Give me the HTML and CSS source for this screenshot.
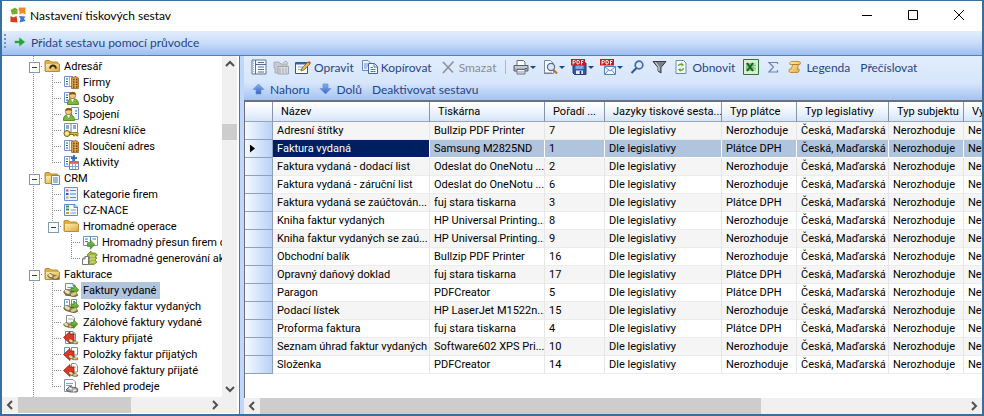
FILE: index.html
```html
<!DOCTYPE html>
<html lang="cs">
<head>
<meta charset="utf-8">
<title>Nastavení tiskových sestav</title>
<link rel="stylesheet" href="styles.css">
</head>
<body>
<svg class="defs" aria-hidden="true">
  <defs>
    <linearGradient id="gold" x1="0" y1="0" x2="1" y2="1"><stop offset="0" stop-color="#fff0b0"/><stop offset="1" stop-color="#dfa93a"/></linearGradient>
    <linearGradient id="greenArrow" x1="0" y1="0" x2="0" y2="1"><stop offset="0" stop-color="#8fce4e"/><stop offset="1" stop-color="#3e8f1c"/></linearGradient>
    <linearGradient id="blueArrow" x1="0" y1="0" x2="0" y2="1"><stop offset="0" stop-color="#86b0f2"/><stop offset="1" stop-color="#3465bd"/></linearGradient>
  </defs>
  <symbol id="folder" viewBox="0 0 16 16"><path d="M1 13V3.500Q1 2.500 2 2.500H5.500L7 4H13Q14 4 14 5V6H15.500V13.500H1.500Z" fill="#e0b040" stroke="#a47a28" stroke-width=".8"/><path d="M2 6H15V13H2Z" fill="url(#gold)"/></symbol>
  <symbol id="sheet" viewBox="0 0 16 16"><path d="M1.500 2.500H9.500V12.500H1.500Z" fill="#fff" stroke="#6f93c5"/><path d="M3 5H5M3 7.500H5M3 10H5" stroke="#1f4e9c"/><path d="M6.500 3V12" stroke="#9ab5dc"/></symbol>
  <symbol id="doc" viewBox="0 0 16 16"><path d="M2.500 1.500H10L12.500 4V13.500H2.500Z" fill="#f6faff" stroke="#6c8fc3"/><path d="M10 1.500V4H12.500" fill="none" stroke="#6c8fc3"/><path d="M4.500 5.500H10M4.500 7.500H10" stroke="#7598ce"/></symbol>
  <symbol id="coins" viewBox="0 0 16 16"><path d="M1 9Q4 6 7 9L11 10Q15 11 14.500 13.500Q12 15.500 8 14L3 12.500Q0 11 1 9Z" fill="#8f8050" stroke="#514725" stroke-width=".7"/><ellipse cx="4.200" cy="9.800" rx="2.800" ry="1.700" fill="#efe0a6" transform="rotate(25 4.200 9.800)"/><ellipse cx="10.800" cy="12" rx="3.100" ry="1.600" fill="#d9c681" transform="rotate(-20 10.800 12)"/></symbol>
  <symbol id="person" viewBox="0 0 16 16"><path d="M4.500 14.500Q4 8.500 9.500 8.500Q15.500 8.500 15.500 14.500Z" fill="#7fb83b" stroke="#46781e" stroke-width=".8"/><path d="M8 9L9.500 12L11 9Z" fill="#fff"/><circle cx="9.500" cy="5.500" r="3.200" fill="#f2c88b" stroke="#986223" stroke-width=".7"/><path d="M6.300 5Q6.500 1.800 9.800 2T12.800 5Q10 3.500 6.300 5Z" fill="#8a5217"/></symbol>
  <symbol id="arrow-out" viewBox="0 0 16 16"><path d="M8 6H11V3L15.700 8L11 13V10H8Z" fill="url(#greenArrow)" stroke="#377d18" stroke-width=".7"/></symbol>
  <symbol id="arrow-in" viewBox="0 0 16 16"><path d="M11 4H7V1.500L.500 7.500L7 13.500V11H11Z" fill="#dc3826" stroke="#9e1c13" stroke-width=".8"/></symbol>

  <symbol id="folder-home" viewBox="0 0 16 16"><use href="#folder"/><path d="M6 10.500Q6.500 7.500 9 7.500T12 10.500" fill="none" stroke="#3c2c0c" stroke-width="2"/></symbol>
  <symbol id="folder-list" viewBox="0 0 16 16"><use href="#folder"/><path d="M7.500 5.500H15.500V14.500H7.500Z" fill="#f5faff" stroke="#5f8dbb"/><path d="M9 8H14M9 10H14M9 12H14" stroke="#4b7f9e"/></symbol>
  <symbol id="folder-coins" viewBox="0 0 16 16"><use href="#folder"/><use href="#coins" x="3" y="1" width="13" height="14"/></symbol>
  <symbol id="company" viewBox="0 0 16 16"><use href="#sheet"/><path d="M8.500 3.500L13 2.500L15.500 4V14.500H8.500Z" fill="#dda04c" stroke="#9c6220" stroke-width=".8"/><path d="M10 5.500H11.500M13 5.500H14.500M10 8H11.500M13 8H14.500M10 10.500H11.500M13 10.500H14.500M10 13H11.500M13 13H14.500" stroke="#754411" stroke-width="1.300"/></symbol>
  <symbol id="people" viewBox="0 0 16 16"><use href="#sheet"/><use href="#person"/></symbol>
  <symbol id="contact" viewBox="0 0 16 16"><path d="M8.500 1.500H15.500V13.500H8.500Z" fill="#f3f8ff" stroke="#6f93c5"/><path d="M12 5H14M12 7.500H14" stroke="#3e70b2"/><use href="#person" x="-4"/></symbol>
  <symbol id="key" viewBox="0 0 16 16"><path d="M1.500 1.500H14.500V12.500H1.500Z" fill="#fff" stroke="#6f93c5"/><path d="M8 2V12" stroke="#5b7ead"/><path d="M3 4H6M3 6H6M10 4H13M10 6H13" stroke="#1f4e9c"/><path d="M6 10.500H15V14H13.500V12.500H12V14H10.500V12.500H6Z" fill="#e3bd31" stroke="#756011" stroke-width=".7"/><circle cx="4" cy="11.500" r="3" fill="#f4d75a" stroke="#756011"/><circle cx="3.500" cy="11.500" r=".9" fill="#fff"/></symbol>
  <symbol id="activity" viewBox="0 0 16 16"><use href="#sheet"/><path d="M11 1V7M8 4H14" stroke="#3569b9" stroke-width="1.800"/><path d="M6.500 7.500H15.500V15.500H6.500Z" fill="#fff" stroke="#6f85a5"/><path d="M7 8.800H15" stroke="#df5c66" stroke-width="2"/><path d="M9.500 10V15M12.500 10V15M7 12.500H15" stroke="#7990b5" stroke-width=".8"/></symbol>
  <symbol id="categories" viewBox="0 0 16 16"><path d="M1.500 1.500H14.500V14.500H1.500Z" fill="#eaf2ff" stroke="#6793d6"/><path d="M7 4.500H13M7 8H13M7 11.500H13" stroke="#5d86c5"/><path d="M3 3.500H5.500V5.500H3Z" fill="#cf5d4c"/><path d="M3 7H5.500V9H3Z" fill="#315cad"/><path d="M3 10.500H5.500V12.500H3Z" fill="#d4a63c"/></symbol>
  <symbol id="nace" viewBox="0 0 16 16"><path d="M1.500 2.500H12L14.500 5V13.500H1.500Z" fill="#fbfdff" stroke="#5d89c9"/><path d="M11 2.500V5.500H14.500" fill="#b9cee9" stroke="#5d89c9"/><path d="M7.500 8H13M7.500 11H13" stroke="#6d98cf"/><path d="M3 4.500H6M3 7.500H6" stroke="#3e9545" stroke-width="2"/><path d="M3 11H6" stroke="#d49636" stroke-width="2"/></symbol>
  <symbol id="move" viewBox="0 0 16 16"><path d="M1.500 2.500H15.500V11.500H1.500Z" fill="#fff" stroke="#6f93c5"/><path d="M8.500 3V11" stroke="#5b7ead"/><path d="M3 5H6M3 7.500H6M10.500 5H14" stroke="#4770ab"/><use href="#arrow-out" x="-2" y="3" width="15" height="15"/></symbol>
  <symbol id="generate" viewBox="0 0 16 16"><path d="M5 5L9 1V3Q14 2 15.500 5L13 7L15 8L13 10L15 12L12 14.500H5L8 12L6 10L8 8Z" fill="#a3b83c" stroke="#66771b" stroke-width=".7"/><path d="M8 6H13M8 9H13M8 12H13" stroke="#dbe48d"/><path d="M.500 9L3 6.500H6.500V14.500H.500Z" fill="#fff" stroke="#757575"/><path d="M.500 9H3V6.500" fill="none" stroke="#757575"/></symbol>
  <symbol id="invoice-out" viewBox="0 0 16 16"><use href="#doc"/><use href="#arrow-out"/><use href="#coins"/></symbol>
  <symbol id="items-out" viewBox="0 0 16 16"><path d="M1.500 1.500H6.500V8H1.500ZM8.500 1.500H13.500V8H8.500Z" fill="#fff" stroke="#6c8fc3"/><path d="M3 4H5M10 4H12" stroke="#486fa9"/><use href="#arrow-out"/><use href="#coins"/></symbol>
  <symbol id="advance-out" viewBox="0 0 16 16"><path d="M3.500 1.500H9L11.500 4V9H3.500Z" fill="#fff" stroke="#8c9384"/><path d="M5 5H10" stroke="#9dac8c"/><use href="#coins" y="1" width="12"/><use href="#arrow-out" y="3" width="16" height="14"/></symbol>
  <symbol id="invoice-in" viewBox="0 0 16 16"><use href="#doc"/><use href="#arrow-in"/><use href="#coins" x="5" y="3" width="11" height="13"/></symbol>
  <symbol id="items-in" viewBox="0 0 16 16"><path d="M1.500 1.500H6.500V8H1.500ZM8.500 1.500H14.500V9H8.500Z" fill="#fff" stroke="#6c8fc3"/><use href="#arrow-in" y="1"/><use href="#coins" x="5" y="3" width="11" height="13"/></symbol>
  <symbol id="advance-in" viewBox="0 0 16 16"><path d="M8.500 1.500H12.500L14.500 4V10H8.500Z" fill="#fff" stroke="#8c9384"/><path d="M10 5H13" stroke="#9aa892"/><use href="#arrow-in" y="1"/><use href="#coins" x="5" y="4" width="11" height="12"/></symbol>
  <symbol id="sales" viewBox="0 0 16 16"><path d="M1.500 1.500H10L12.500 4V13.500H1.500Z" fill="#fff" stroke="#8193aa"/><path d="M3 5.500H10M3 7.500H9" stroke="#83a1c6"/><path d="M5 10Q6 7 9 9L14 10Q16 12 14 14H7L3 12Z" fill="#a8a8a8" stroke="#4c4c4c" stroke-width=".8"/><path d="M6 10L9 11M10 13L13 12" stroke="#eee" stroke-width="1.500"/></symbol>

  <symbol id="logo" viewBox="0 0 16 16"><path d="M.500 3L5 .500L7.500 2.500V7L2 7.500Z" fill="#76ad35"/><path d="M9 .500H15.500V7.500L12.500 6L9.500 7.500V4.500L8.500 3Z" fill="#ef8c21"/><path d="M.500 9L3.500 10.500L6.500 9L7.500 15.500L.500 15Z" fill="#d9381e"/><path d="M9 9L15.500 9.500L14 11.500L15.500 14L9.500 15.500L10.500 12Z" fill="#3d78c7"/></symbol>
  <symbol id="go" viewBox="0 0 16 16"><path d="M2.500 6.500H7V3L13.500 8L7 13V9.500H2.500Z" fill="#25a046" stroke="#b8ebbe" stroke-width=".7"/></symbol>
  <symbol id="form" viewBox="0 0 16 16"><path d="M1 1H15V15H1Z" fill="#f6faff" stroke="#58749d"/><path d="M4.500 1V15M5 5.500H15M7 3.500H13M7 8H13M7 10.500H13M7 13H13" stroke="#536f98"/><path d="M2.500 2V14" stroke="#9eb5d5" stroke-dasharray="1 1"/></symbol>
  <symbol id="form-off" viewBox="0 0 16 16"><path d="M1 3H6L8 5H14V14H2V9H1Z" fill="#c6c9cf" stroke="#a9adb5"/><path d="M5 7.500H15.500V15H5Z" fill="#dadde1" stroke="#9fa4ad"/><path d="M7 9V14M10 9V14M13 9V14M10 4L13 2L15 5" fill="none" stroke="#a5a9b1"/></symbol>
  <symbol id="edit" viewBox="0 0 16 16"><path d="M.500 3.500H12.500V14.500H.500Z" fill="#fff" stroke="#44546d"/><path d="M1 4.500H12" stroke="#2d66b5" stroke-width="2"/><path d="M3 8H8M3 10.500H7" stroke="#8ca7ce"/><path d="M6 12L7 9L13 3L15 5L9 11Z" fill="#e7b54b" stroke="#74531a" stroke-width=".7"/><path d="M13 3L14 2L16 4L15 5Z" fill="#d4413a"/></symbol>
  <symbol id="copy" viewBox="0 0 16 16"><path d="M.500 1.500H6L8.500 4V11.500H.500Z" fill="#eef5ff" stroke="#6289c0"/><path d="M2 5H6M2 7H6M2 9H5" stroke="#6a91cb"/><path d="M6.500 4.500H12.500L15.500 7.500V14.500H6.500Z" fill="#f4f9ff" stroke="#3a69b0"/><path d="M12 4.500V8H15.500M8.500 8.500H11M8.500 10.500H13.500M8.500 12.500H13.500" fill="none" stroke="#4b7cc5"/></symbol>
  <symbol id="delete" viewBox="0 0 16 16"><path d="M3 3L13 13.500M13.500 2.500L3 14" stroke="#8f929a" stroke-width="1.700"/></symbol>
  <symbol id="print" viewBox="0 0 16 16"><path d="M4 1.500H10.500L12 3V7H4Z" fill="#fff" stroke="#646c78"/><path d="M1 6.500H15V12H1Z" fill="#a9afba" stroke="#59606d"/><path d="M2 8H14" stroke="#e4e6ea"/><path d="M4 10.500H12V15H4Z" fill="#f6f6f6" stroke="#666d79"/><path d="M5 13H11" stroke="#8e96a3"/><path d="M12 9.500H14" stroke="#345d9b"/></symbol>
  <symbol id="preview" viewBox="0 0 16 16"><path d="M2.500 1.500H8.500L11.500 4.500V14.500H2.500Z" fill="#fff" stroke="#788da9"/><circle cx="9" cy="8" r="3.600" fill="#d7e7f7" stroke="#596b80" stroke-width="1.200"/><path d="M11.500 11L15 14.500" stroke="#b87528" stroke-width="2.200"/><path d="M2 14H10" stroke="#6a7888"/></symbol>
  <symbol id="pdf-tag" viewBox="0 0 16 16"><path d="M0 0H14V6.500H0Z" fill="#c41b20"/><path d="M2 5.500V1.500H3.500Q4.500 1.500 4.500 2.500T3.500 3.700H2M6 1.500V5H7Q8.500 5 8.500 3.200T7 1.500ZM10.500 5.500V1.500H12.500M10.500 3.500H12" fill="none" stroke="#fff" stroke-width=".9"/></symbol>
  <symbol id="pdf-save" viewBox="0 0 16 16"><path d="M2 4H15V15.500H3.500L2 14Z" fill="#305aa8" stroke="#203e7e"/><path d="M4.500 6H12.500V10H4.500Z" fill="#7ea6e4"/><path d="M5 11.500H12V15H5Z" fill="#e8eaf0"/><path d="M9.500 12V15" stroke="#222f48" stroke-width="1.500"/><use href="#pdf-tag"/></symbol>
  <symbol id="pdf-mail" viewBox="0 0 16 16"><path d="M4.500 7.500H15.500V15.500H4.500Z" fill="#f3f9ff" stroke="#5382bf"/><path d="M5 8L10 12L15 8M5 15L8.500 11M15 15L11.500 11" fill="none" stroke="#5b8dcc"/><use href="#pdf-tag"/></symbol>
  <symbol id="search" viewBox="0 0 16 16"><path d="M2.500 14L7.500 9" stroke="#315aa0" stroke-width="2.200"/><circle cx="10" cy="6" r="3.800" fill="#d9ecff" stroke="#416bac" stroke-width="1.700"/></symbol>
  <symbol id="filter" viewBox="0 0 16 16"><path d="M2 2.500H15L10 8.500V14L7 12V8.500Z" fill="#7b8088" stroke="#3b3e45"/><path d="M4.500 3.500L8 8V12" fill="none" stroke="#e6e8ed"/></symbol>
  <symbol id="refresh" viewBox="0 0 16 16"><path d="M3 1.500H10.500L13 4V14.500H3Z" fill="#f4faff" stroke="#6b88ad"/><path d="M5.500 7Q6 4.500 9 5.500M10.500 9Q10 12 7 11" fill="none" stroke="#65a82c" stroke-width="1.400"/><path d="M8.500 3.500L11 6L8.500 7.500ZM7.500 9L5 10.500L7.500 13Z" fill="#65a82c"/></symbol>
  <symbol id="excel" viewBox="0 0 16 16"><path d="M.500 .500H15.500V15.500H.500Z" fill="#d7efd3" stroke="#257b31"/><path d="M3 4H13V12H3Z" fill="#85c77e"/><path d="M4 4L10 12M10 4L4 12" stroke="#166522" stroke-width="2"/><path d="M11 5H13M11 8H13M11 11H13" stroke="#edfbe9"/></symbol>
  <symbol id="sum" viewBox="0 0 16 16"><path d="M12.500 5V3.500H4L8.500 8L4 13H12.500V11" fill="none" stroke="#6784b2" stroke-width="1.200"/></symbol>
  <symbol id="scroll" viewBox="0 0 16 16"><path d="M4 2.500H12Q14.500 3 13 5.500H11.500L10.500 10H12Q13 12 11 13.500H3Q1 12.500 2.500 10H4L6 5.500H3Q2 3.500 4 2.500Z" fill="url(#gold)" stroke="#b97b20" stroke-width=".8"/><path d="M6 5.500H11" stroke="#9f6515" stroke-width=".8"/></symbol>
  <symbol id="up" viewBox="0 0 16 16"><path d="M7.500 3L13 8.500H10V13H5V8.500H2Z" fill="url(#blueArrow)" stroke="#6690d8" stroke-width=".7"/></symbol>
  <symbol id="down" viewBox="0 0 16 16"><path d="M7.500 13L2 7.500H5V3H10V7.500H13Z" fill="url(#blueArrow)" stroke="#6690d8" stroke-width=".7"/></symbol>
  <symbol id="chev-up" viewBox="0 0 16 16"><path d="M4 10L8 6L12 10" fill="none" stroke="#505050" stroke-width="2"/></symbol>
  <symbol id="chev-down" viewBox="0 0 16 16"><path d="M4 6L8 10L12 6" fill="none" stroke="#505050" stroke-width="2"/></symbol>
  <symbol id="chev-left" viewBox="0 0 16 16"><path d="M10 4L6 8L10 12" fill="none" stroke="#505050" stroke-width="2"/></symbol>
  <symbol id="chev-right" viewBox="0 0 16 16"><path d="M6 4L10 8L6 12" fill="none" stroke="#505050" stroke-width="2"/></symbol>
  <symbol id="minimize" viewBox="0 0 12 12"><path d="M1 6.500H11" stroke="#000"/></symbol>
  <symbol id="maximize" viewBox="0 0 12 12"><path d="M1.500 1.500H10.500V10.500H1.500Z" fill="none" stroke="#000"/></symbol>
  <symbol id="close" viewBox="0 0 12 12"><path d="M1 1L11 11M11 1L1 11" stroke="#000"/></symbol>
</svg>

<div class="window">
  <header class="titlebar">
    <svg class="icon"><use href="#logo"/></svg>
    <h1>Nastavení tiskových sestav</h1>
    <div class="window-buttons">
      <button type="button" aria-label="Minimalizovat"><svg><use href="#minimize"/></svg></button>
      <button type="button" aria-label="Maximalizovat"><svg><use href="#maximize"/></svg></button>
      <button type="button" aria-label="Zavřít"><svg><use href="#close"/></svg></button>
    </div>
  </header>

  <div class="mainbar">
    <span class="grip"></span>
    <button type="button" class="tool"><svg class="icon"><use href="#go"/></svg>Přidat sestavu pomocí průvodce</button>
  </div>

  <div class="workspace">
    <aside class="sidebar">
      <div class="tree-area">
        <ul class="tree">
          <li><i class="box"></i><svg class="icon"><use href="#folder-home"/></svg><span>Adresář</span></li>
          <li><i></i><i class="tee"></i><svg class="icon"><use href="#company"/></svg><span>Firmy</span></li>
          <li><i></i><i class="tee"></i><svg class="icon"><use href="#people"/></svg><span>Osoby</span></li>
          <li><i></i><i class="tee"></i><svg class="icon"><use href="#contact"/></svg><span>Spojení</span></li>
          <li><i></i><i class="tee"></i><svg class="icon"><use href="#key"/></svg><span>Adresní klíče</span></li>
          <li><i></i><i class="tee"></i><svg class="icon"><use href="#company"/></svg><span>Sloučení adres</span></li>
          <li><i></i><i class="end"></i><svg class="icon"><use href="#activity"/></svg><span>Aktivity</span></li>
          <li><i class="box"></i><svg class="icon"><use href="#folder-list"/></svg><span>CRM</span></li>
          <li><i></i><i class="tee"></i><svg class="icon"><use href="#categories"/></svg><span>Kategorie firem</span></li>
          <li><i></i><i class="tee"></i><svg class="icon"><use href="#nace"/></svg><span>CZ-NACE</span></li>
          <li><i></i><i class="end box"></i><svg class="icon"><use href="#folder"/></svg><span>Hromadné operace</span></li>
          <li><i></i><i></i><i class="tee"></i><svg class="icon"><use href="#move"/></svg><span>Hromadný přesun firem c</span></li>
          <li><i></i><i></i><i class="end"></i><svg class="icon"><use href="#generate"/></svg><span>Hromadné generování ak</span></li>
          <li><i class="box"></i><svg class="icon"><use href="#folder-coins"/></svg><span>Fakturace</span></li>
          <li class="selected"><i></i><i class="tee"></i><svg class="icon"><use href="#invoice-out"/></svg><span>Faktury vydané</span></li>
          <li><i></i><i class="tee"></i><svg class="icon"><use href="#items-out"/></svg><span>Položky faktur vydaných</span></li>
          <li><i></i><i class="tee"></i><svg class="icon"><use href="#advance-out"/></svg><span>Zálohové faktury vydané</span></li>
          <li><i></i><i class="tee"></i><svg class="icon"><use href="#invoice-in"/></svg><span>Faktury přijaté</span></li>
          <li><i></i><i class="tee"></i><svg class="icon"><use href="#items-in"/></svg><span>Položky faktur přijatých</span></li>
          <li><i></i><i class="tee"></i><svg class="icon"><use href="#advance-in"/></svg><span>Zálohové faktury přijaté</span></li>
          <li><i></i><i class="end"></i><svg class="icon"><use href="#sales"/></svg><span>Přehled prodeje</span></li>
        </ul>
        <div class="scroll vertical">
          <svg class="icon"><use href="#chev-up"/></svg>
          <div class="track"><div class="thumb"></div></div>
          <svg class="icon"><use href="#chev-down"/></svg>
        </div>
      </div>
      <div class="scroll">
        <svg class="icon"><use href="#chev-left"/></svg>
        <div class="track"><div class="thumb"></div></div>
        <svg class="icon"><use href="#chev-right"/></svg>
        <span class="corner"></span>
      </div>
    </aside>

    <main class="content">
      <div class="toolbar">
        <div class="tools">
          <button type="button" class="tool" aria-label="Formulář"><svg class="icon"><use href="#form"/></svg></button>
          <button type="button" class="tool" aria-label="Složka" disabled><svg class="icon"><use href="#form-off"/></svg></button>
          <button type="button" class="tool labelled"><svg class="icon"><use href="#edit"/></svg>Opravit</button>
          <button type="button" class="tool labelled"><svg class="icon"><use href="#copy"/></svg>Kopírovat</button>
          <button type="button" class="tool labelled" disabled><svg class="icon"><use href="#delete"/></svg>Smazat</button>
          <span class="separator"></span>
          <button type="button" class="tool menu" aria-label="Tisk"><svg class="icon"><use href="#print"/></svg></button>
          <button type="button" class="tool menu" aria-label="Náhled"><svg class="icon"><use href="#preview"/></svg></button>
          <button type="button" class="tool menu" aria-label="Uložit PDF"><svg class="icon"><use href="#pdf-save"/></svg></button>
          <button type="button" class="tool menu" aria-label="Odeslat PDF"><svg class="icon"><use href="#pdf-mail"/></svg></button>
          <button type="button" class="tool" aria-label="Hledat"><svg class="icon"><use href="#search"/></svg></button>
          <button type="button" class="tool" aria-label="Filtr"><svg class="icon"><use href="#filter"/></svg></button>
          <button type="button" class="tool labelled"><svg class="icon"><use href="#refresh"/></svg>Obnovit</button>
          <button type="button" class="tool" aria-label="Excel"><svg class="icon"><use href="#excel"/></svg></button>
          <button type="button" class="tool" aria-label="Součet"><svg class="icon"><use href="#sum"/></svg></button>
          <button type="button" class="tool labelled"><svg class="icon"><use href="#scroll"/></svg>Legenda</button>
          <button type="button" class="tool plain">Přečíslovat</button>
        </div>
        <div class="tools">
          <button type="button" class="tool labelled"><svg class="icon"><use href="#up"/></svg>Nahoru</button>
          <button type="button" class="tool labelled"><svg class="icon"><use href="#down"/></svg>Dolů</button>
          <button type="button" class="tool plain">Deaktivovat sestavu</button>
        </div>
      </div>

      <div class="grid">
        <table>
          <colgroup><col class="c-mark"><col class="c-name"><col class="c-printer"><col class="c-order"><col class="c-lang"><col class="c-payer"><col class="c-legis"><col class="c-subject"><col></colgroup>
          <thead><tr><th></th><th>Název</th><th>Tiskárna</th><th>Pořadí ...</th><th>Jazyky tiskové sesta...</th><th>Typ plátce</th><th>Typ legislativy</th><th>Typ subjektu</th><th>Vy</th></tr></thead>
          <tbody>
            <tr><th></th><td>Adresní štítky</td><td>Bullzip PDF Printer</td><td>7</td><td>Dle legislativy</td><td>Nerozhoduje</td><td>Česká, Maďarská</td><td>Nerozhoduje</td><td>Ne</td></tr>
            <tr class="current"><th><span class="pointer"></span></th><td>Faktura vydaná</td><td>Samsung M2825ND</td><td>1</td><td>Dle legislativy</td><td>Plátce DPH</td><td>Česká, Maďarská</td><td>Nerozhoduje</td><td>Ne</td></tr>
            <tr><th></th><td>Faktura vydaná - dodací list</td><td>Odeslat do OneNotu ...</td><td>2</td><td>Dle legislativy</td><td>Nerozhoduje</td><td>Česká, Maďarská</td><td>Nerozhoduje</td><td>Ne</td></tr>
            <tr><th></th><td>Faktura vydaná - záruční list</td><td>Odeslat do OneNotu ...</td><td>6</td><td>Dle legislativy</td><td>Nerozhoduje</td><td>Česká, Maďarská</td><td>Nerozhoduje</td><td>Ne</td></tr>
            <tr><th></th><td>Faktura vydaná se zaúčtován...</td><td>fuj stara tiskarna</td><td>3</td><td>Dle legislativy</td><td>Plátce DPH</td><td>Česká, Maďarská</td><td>Nerozhoduje</td><td>Ne</td></tr>
            <tr><th></th><td>Kniha faktur vydaných</td><td>HP Universal Printing...</td><td>8</td><td>Dle legislativy</td><td>Nerozhoduje</td><td>Česká, Maďarská</td><td>Nerozhoduje</td><td>Ne</td></tr>
            <tr><th></th><td>Kniha faktur vydaných se zaú...</td><td>HP Universal Printing...</td><td>9</td><td>Dle legislativy</td><td>Nerozhoduje</td><td>Česká, Maďarská</td><td>Nerozhoduje</td><td>Ne</td></tr>
            <tr><th></th><td>Obchodní balík</td><td>Bullzip PDF Printer</td><td>16</td><td>Dle legislativy</td><td>Nerozhoduje</td><td>Česká, Maďarská</td><td>Nerozhoduje</td><td>Ne</td></tr>
            <tr><th></th><td>Opravný daňový doklad</td><td>fuj stara tiskarna</td><td>17</td><td>Dle legislativy</td><td>Plátce DPH</td><td>Česká, Maďarská</td><td>Nerozhoduje</td><td>Ne</td></tr>
            <tr><th></th><td>Paragon</td><td>PDFCreator</td><td>5</td><td>Dle legislativy</td><td>Plátce DPH</td><td>Česká, Maďarská</td><td>Nerozhoduje</td><td>Ne</td></tr>
            <tr><th></th><td>Podací lístek</td><td>HP LaserJet M1522n...</td><td>15</td><td>Dle legislativy</td><td>Nerozhoduje</td><td>Česká, Maďarská</td><td>Nerozhoduje</td><td>Ne</td></tr>
            <tr><th></th><td>Proforma faktura</td><td>fuj stara tiskarna</td><td>4</td><td>Dle legislativy</td><td>Plátce DPH</td><td>Česká, Maďarská</td><td>Nerozhoduje</td><td>Ne</td></tr>
            <tr><th></th><td>Seznam úhrad faktur vydaných</td><td>Software602 XPS Pri...</td><td>10</td><td>Dle legislativy</td><td>Nerozhoduje</td><td>Česká, Maďarská</td><td>Nerozhoduje</td><td>Ne</td></tr>
            <tr><th></th><td>Složenka</td><td>PDFCreator</td><td>14</td><td>Dle legislativy</td><td>Nerozhoduje</td><td>Česká, Maďarská</td><td>Nerozhoduje</td><td>Ne</td></tr>
          </tbody>
        </table>
      </div>
      <div class="scroll wide">
        <svg class="icon"><use href="#chev-left"/></svg>
        <div class="track"><div class="thumb"></div></div>
        <svg class="icon"><use href="#chev-right"/></svg>
      </div>
    </main>
  </div>
</div>
</body>
</html>
```
FILE: styles.css
```css
* { box-sizing: border-box; }
body { margin: 0; font: 11px Roboto, sans-serif; color: #000; }
.defs { position: absolute; width: 0; height: 0; }
.icon { width: 16px; height: 16px; flex: none; display: block; }
button { font: inherit; color: inherit; border: 0; background: none; padding: 0; }

.window { height: 100vh; display: flex; flex-direction: column; border: 1px solid #396f9f; border-left-width: 2px; border-right-width: 2px; border-bottom-width: 2px; background: #fff; overflow: hidden; }

.titlebar { display: flex; align-items: center; gap: 4px; height: 30px; flex: none; padding: 0 0 2px 8px; }
.titlebar h1 { flex: 1; margin: 0; font: 12px Lato, sans-serif; }
.window-buttons { display: flex; }
.window-buttons button { width: 46px; height: 28px; display: grid; place-items: center; }
.window-buttons svg { width: 12px; height: 12px; display: block; }

.mainbar { display: flex; align-items: center; height: 25px; flex: none; padding: 0 4px 2px 2px; border-bottom: 1px solid #5480b8; background: linear-gradient(#e2eefe, #c9dcf8 50%, #9dbef0); }
.grip { width: 2px; height: 16px; margin-right: 3px; background: repeating-linear-gradient(#6f93ca 0 2px, transparent 2px 4px); }

.tool { display: flex; align-items: center; gap: 3px; padding: 0 3px; height: 20px; font: 12px Lato, sans-serif; color: #1f468c; white-space: nowrap; flex: none; }
.tool:disabled { color: #8c8c8c; }
.labelled { margin-right: 2px; }
.plain { padding: 0 5px; }
.menu { gap: 1px; }
.menu::after { content: ""; border: 3px solid transparent; border-top-color: #1f468c; border-bottom: 0; }
.separator { width: 1px; height: 14px; margin: 0 4px; background: #9ab9e8; flex: none; }

.workspace { flex: 1; min-height: 0; display: flex; gap: 4px; background: #bfd7fa; }

.sidebar { width: 238px; flex: none; display: flex; flex-direction: column; padding: 0 2px 1px 0; background: #fff; border-right: 1px solid #677487; }
.tree-area { flex: 1; min-height: 0; display: flex; }
.tree { flex: 1; min-width: 0; margin: 0; padding: 2px 0 0 22px; list-style: none; overflow: hidden;
  background: repeating-linear-gradient(#8a8a8a 0 1px, transparent 1px 2px) 31px 0 / 1px 100% no-repeat; }
.tree li { display: flex; align-items: center; height: 16px; white-space: nowrap; }
.tree i { position: relative; width: 19px; height: 16px; flex: none; }
.tree i::before { content: ""; position: absolute; }
.tree i + .tee { background: repeating-linear-gradient(#8a8a8a 0 1px, transparent 1px 2px) 9px 0 / 1px 100% no-repeat, repeating-linear-gradient(90deg, #8a8a8a 0 1px, transparent 1px 2px) 9px 8px / 10px 1px no-repeat; }
.tree i + .end { background: repeating-linear-gradient(#8a8a8a 0 1px, transparent 1px 2px) 9px 0 / 1px 8px no-repeat, repeating-linear-gradient(90deg, #8a8a8a 0 1px, transparent 1px 2px) 9px 8px / 10px 1px no-repeat; }
.tree i.box:first-child { background: repeating-linear-gradient(90deg, #8a8a8a 0 1px, transparent 1px 2px) 9px 8px / 10px 1px no-repeat; }
.tree .box::before { left: 5px; top: 4px; width: 9px; height: 9px; border: 1px solid #8499ad; background: linear-gradient(#27408b, #27408b) center / 5px 1px no-repeat #fff; }
.tree .icon { margin-left: 1px; }
.tree span { line-height: 17px; padding-left: 2px; margin-left: 2px; }
.tree .selected span { padding-right: 4px; background: #b0c4de; }

.scroll { display: flex; align-items: center; height: 16px; flex: none; background: #f0f0f0; }
.scroll .track { flex: 1; align-self: stretch; display: flex; }
.scroll .thumb { background: #cdcdcd; width: 60%; }
.corner { width: 14px; }
.vertical { flex-direction: column; width: 15px; height: auto; }
.vertical .track { flex-direction: column; }
.vertical .thumb { width: auto; height: 16px; margin-top: 52px; }
.wide .thumb { width: 71%; }

.content { flex: 1; min-width: 0; display: flex; flex-direction: column; background: #fff; }
.toolbar { flex: none; padding: 0 4px; background: linear-gradient(#e2edfd, #d8e6fb 60%, #a4c3f1); }
.tools { display: flex; height: 22px; align-items: center; }

.grid { flex: 1; min-height: 0; overflow: hidden; border-top: 2px solid #6d7078; border-left: 1px solid #6d7078; }
table { width: 100%; table-layout: fixed; border-collapse: separate; border-spacing: 0; font: 11px Roboto, sans-serif; }
.c-mark { width: 28px; }
.c-name { width: 157px; }
.c-printer { width: 115px; }
.c-order { width: 60px; }
.c-lang { width: 117px; }
.c-payer, .c-subject { width: 75px; }
.c-legis { width: 92px; }
.grid th, .grid td { padding: 0; text-align: left; font-weight: 400; white-space: nowrap; overflow: hidden; }
thead th { height: 20px; background: linear-gradient(#fff, #f2f7fe 40%, #d6e5fa); border-right: 1px solid #8794a7; border-bottom: 1px solid #9aa5b5; }
.grid thead th { padding-left: 8px; }
.grid td { height: 18px; line-height: 17px; padding-left: 4px; border-right: 1px solid #e6e6e6; border-bottom: 1px solid #ececec; }
.grid tr > :last-child { border-right: 0; }
tbody tr:nth-child(odd) td { background: #f5f5f5; }
tbody th { background: linear-gradient(90deg, #f4f9ff, #b9d2f6); border-bottom: 1px solid #8fa0b8; border-right: 1px solid #8fa0b8; }
.grid .current td { background: #b0c4de; border-color: #fff; }
.grid .current td:nth-child(2) { background: #001f60; color: #fff; }
.pointer { display: block; width: 5px; height: 8px; margin-left: 5px; background: #000; clip-path: polygon(0 0, 100% 50%, 0 100%); }
```
